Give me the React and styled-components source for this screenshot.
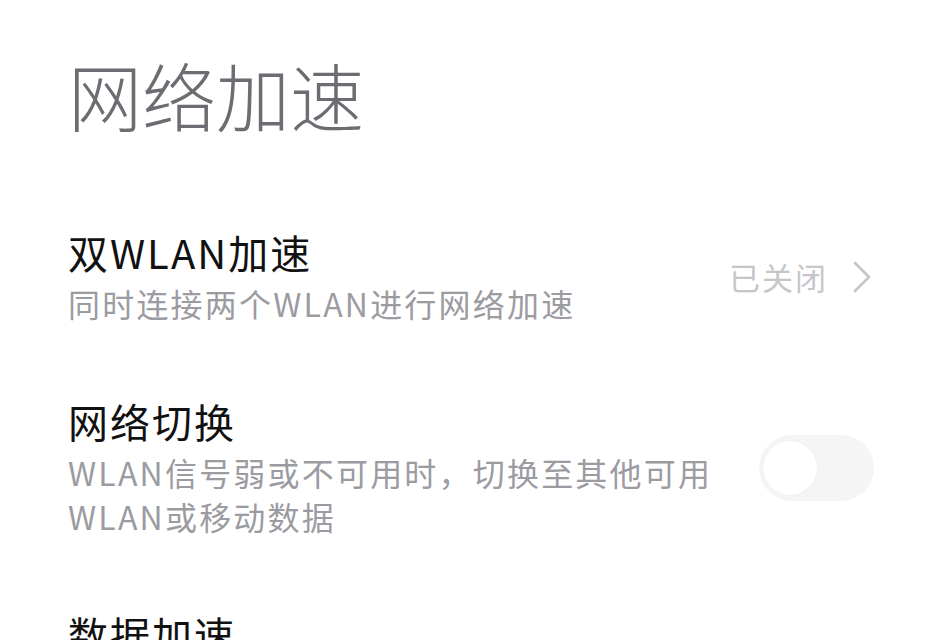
import React, { useState } from 'react';
import styled, { createGlobalStyle } from 'styled-components';

const GlobalStyle = createGlobalStyle`
  html, body {
    margin: 0;
    padding: 0;
    background: #fff;
  }
  body {
    font-family: "Noto Sans CJK SC", "Noto Sans", sans-serif;
    -webkit-font-smoothing: antialiased;
  }
`;

const Page = styled.div`
  width: 940px;
  height: 640px;
  overflow: hidden;
  background: #fff;
  padding: 0 68px;
  box-sizing: border-box;
`;

const PageTitle = styled.h1`
  margin: 0;
  padding-top: 48px;
  font-size: 74px;
  font-weight: 300;
  line-height: 92px;
  color: #6c6c72;
`;

const List = styled.div`
  display: flex;
  flex-direction: column;
  margin-top: 88px;
  gap: 72px;
`;

const Row = styled.div`
  display: flex;
  align-items: center;
  justify-content: space-between;
  gap: 40px;
`;

const Texts = styled.div`
  display: flex;
  flex-direction: column;
  max-width: 660px;
`;

const ItemTitle = styled.div`
  font-size: 40px;
  line-height: 48px;
  letter-spacing: 2px;
  color: #111;
  font-weight: 400;
`;

const ItemDesc = styled.div`
  margin-top: 5px;
  font-size: 32px;
  line-height: 44px;
  letter-spacing: 2.2px;
  color: #9b9ba1;
`;

const Value = styled.div`
  display: flex;
  align-items: center;
  gap: 24px;
  font-size: 31px;
  letter-spacing: 2px;
  color: #c6c6ca;
  white-space: nowrap;
  margin-right: 0;
`;

const Track = styled.button`
  position: relative;
  flex: none;
  width: 115px;
  height: 66px;
  border: none;
  border-radius: 33px;
  padding: 0;
  background: ${({ $on }) => ($on ? '#3482ff' : '#f5f5f6')};
  cursor: pointer;
  margin-right: -2px;
`;

const Knob = styled.span`
  position: absolute;
  top: 6px;
  left: ${({ $on }) => ($on ? '55px' : '4px')};
  width: 54px;
  height: 54px;
  border-radius: 50%;
  background: #fff;
  box-shadow: 0 0 2px rgba(0, 0, 0, 0.06);
`;

const Chevron = () => (
  <svg width="20" height="32" viewBox="0 0 20 32" fill="none">
    <path d="M3 2 L17 16 L3 30" stroke="#c6c6ca" strokeWidth="2.6" strokeLinecap="round" strokeLinejoin="round" />
  </svg>
);

const Switch = () => {
  const [on, setOn] = useState(false);
  return (
    <Track $on={on} onClick={() => setOn(!on)}>
      <Knob $on={on} />
    </Track>
  );
};

const App = () => (
  <Page>
    <GlobalStyle />
    <PageTitle>网络加速</PageTitle>
    <List>
      <Row>
        <Texts>
          <ItemTitle>双WLAN加速</ItemTitle>
          <ItemDesc>同时连接两个WLAN进行网络加速</ItemDesc>
        </Texts>
        <Value>
          已关闭
          <Chevron />
        </Value>
      </Row>
      <Row>
        <Texts>
          <ItemTitle>网络切换</ItemTitle>
          <ItemDesc>WLAN信号弱或不可用时，切换至其他可用WLAN或移动数据</ItemDesc>
        </Texts>
        <Switch />
      </Row>
      <Row>
        <Texts>
          <ItemTitle>数据加速</ItemTitle>
        </Texts>
      </Row>
    </List>
  </Page>
);

export default App;
